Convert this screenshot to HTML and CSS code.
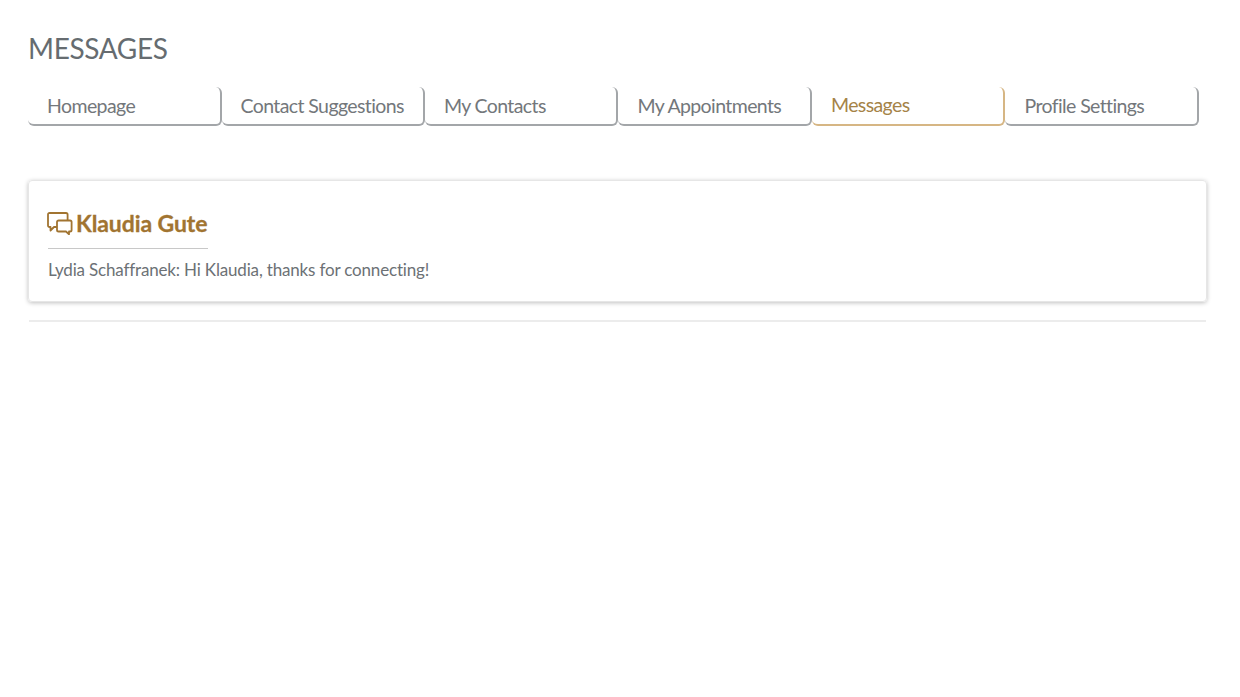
FILE: index.html
```html
<!DOCTYPE html>
<html lang="en">
<head>
<meta charset="utf-8">
<title>Messages</title>
<link rel="stylesheet" href="styles.css">
</head>
<body>
<main class="page">
  <h1 class="title">MESSAGES</h1>
  <nav class="tabs">
    <a class="tab">Homepage</a>
    <a class="tab">Contact Suggestions</a>
    <a class="tab">My Contacts</a>
    <a class="tab">My Appointments</a>
    <a class="tab tab-active">Messages</a>
    <a class="tab">Profile Settings</a>
  </nav>
  <section class="card">
    <h2 class="card-title">
      <svg class="card-icon" viewBox="0 0 26 23" width="26" height="23" aria-hidden="true">
        <path d="M10 15H7L3.5 18.5V15H2.6C1.6 15 1 14.4 1 13.4V2.6C1 1.6 1.6 1 2.6 1H19C20 1 20.6 1.6 20.6 2.6V8" />
        <path d="M11.6 8.5H23C24 8.5 24.6 9.1 24.6 10.1V17.9C24.6 18.9 24 19.5 23 19.5H22V22.3L19 19.5H11.6C10.6 19.5 10 18.9 10 17.9V10.1C10 9.1 10.6 8.5 11.6 8.5Z" />
      </svg>
      <span class="card-name">Klaudia Gute</span>
    </h2>
    <p class="card-text">Lydia Schaffranek: Hi Klaudia, thanks for connecting!</p>
  </section>
  <hr class="rule">
</main>
</body>
</html>
```
FILE: styles.css
```css
* { box-sizing: border-box; }
html, body { margin: 0; background: #fff; }
body { font-family: Lato, "Noto Sans", sans-serif; color: #6c7175; }
.page { width: 1240px; height: 697px; padding: 30px 33px 0 28px; overflow: hidden; }
.title { margin: 0; font-size: 28px; line-height: 36px; font-weight: 400; letter-spacing: -0.35px; color: #666c70; }
.tabs { display: flex; margin-top: 21px; width: 1171px; }
.tab {
  flex: 1 1 0;
  min-width: max-content;
  height: 39px;
  padding: 6px 19px 0;
  font-size: 19.5px;
  line-height: 26px;
  letter-spacing: -0.6px;
  color: #73777b;
  border-bottom: 2px solid #a3a6a9;
  border-right: 2px solid #a3a6a9;
  border-radius: 0 6px 6px 6px;
  white-space: nowrap;
}
.tab-active { color: #a58347; border-color: #d6b684; padding-top: 5px; }
.card {
  margin-top: 54px;
  width: 1179px;
  height: 122px;
  padding: 29px 19px 0;
  border: 1px solid #e6e6e6;
  border-radius: 4px;
  box-shadow: 0 1px 4px rgba(0,0,0,.25);
}
.card-title {
  display: flex;
  align-items: flex-start;
  gap: 3px;
  width: 160px;
  height: 39px;
  margin: 0;
  font-size: 23px;
  line-height: 28px;
  font-weight: 700;
  white-space: nowrap;
  color: #a17431;
  border-bottom: 1px solid #c8c8c8;
}
.card-name { margin-top: -1px; letter-spacing: -0.1px; -webkit-text-stroke: 0.3px #a17431; }
.card-icon { flex: none; margin: 2px 0 0 -1px; fill: none; stroke: #a17431; stroke-width: 1.8; stroke-linejoin: round; }
.card-text { margin: 10px 0 0; font-size: 17px; line-height: 21px; letter-spacing: -0.17px; color: #6c7175; white-space: nowrap; }
.rule { width: 1177px; height: 2px; margin: 18px 0 0 1px; border: 0; background: #ececec; }
```
